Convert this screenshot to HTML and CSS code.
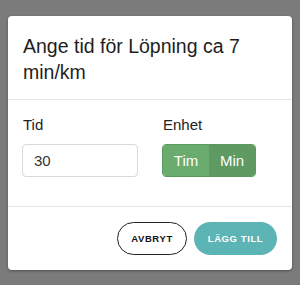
FILE: index.html
```html
<!DOCTYPE html>
<html lang="sv">
<head>
<meta charset="utf-8">
<link rel="stylesheet" href="styles.css">
</head>
<body>
<div class="modal">
  <div class="modal-header">
    <h2 class="title">Ange tid för Löpning ca 7 min/km</h2>
  </div>
  <div class="modal-body">
    <div class="field field-time">
      <label class="label">Tid</label>
      <input class="input" type="text" value="30">
    </div>
    <div class="field field-unit">
      <span class="label">Enhet</span>
      <div class="toggle">
        <span class="seg seg-tim">Tim</span>
        <span class="seg seg-min">Min</span>
      </div>
    </div>
  </div>
  <div class="modal-footer">
    <button class="btn btn-outline">AVBRYT</button>
    <button class="btn btn-primary">LÄGG TILL</button>
  </div>
</div>
</body>
</html>
```
FILE: styles.css
```css
html, body {
  margin: 0;
  padding: 0;
}
body {
  background: #7b7b7b;
  width: 300px;
  height: 285px;
  overflow: hidden;
  font-family: "Liberation Sans", Arial, sans-serif;
  color: #222;
  padding: 16px 8px 0;
  box-sizing: border-box;
}
.modal {
  background: #fff;
  border-radius: 4px;
  box-shadow: 0 1px 3px rgba(0,0,0,0.35);
  height: 254px;
  display: flex;
  flex-direction: column;
}
.modal-header {
  padding: 17px 15px 14px;
  border-bottom: 1px solid #e6e6e6;
}
.title {
  margin: 0;
  font-size: 19.5px;
  font-weight: normal;
  line-height: 26px;
  color: #1e1e1e;
}
.modal-body {
  display: flex;
  padding: 16px 14px 0;
  height: 90px;
  border-bottom: 1px solid #e6e6e6;
}
.field {
  display: flex;
  flex-direction: column;
}
.field-time {
  width: 116px;
  margin-right: 24px;
}
.label {
  font-size: 15px;
  line-height: 18px;
  color: #222;
  padding-left: 1px;
  margin-bottom: 10px;
}
.input {
  box-sizing: border-box;
  width: 116px;
  height: 33px;
  border: 1px solid #d9d9d9;
  border-radius: 4px;
  padding: 0 11px;
  font-family: "Liberation Sans", Arial, sans-serif;
  font-size: 15px;
  color: #333;
  outline: none;
}
.toggle {
  display: flex;
  width: 94px;
  height: 33px;
  border: 1px solid #5a9a5e;
  border-radius: 4px;
  overflow: hidden;
  box-sizing: border-box;
}
.seg {
  flex: 1;
  display: flex;
  align-items: center;
  justify-content: center;
  color: #fff;
  font-size: 15px;
}
.seg-tim {
  background: #6aab6e;
}
.seg-min {
  background: #5e9a62;
}
.modal-footer {
  display: flex;
  justify-content: flex-end;
  gap: 7px;
  padding: 15px 15px 0;
}
.btn {
  height: 33px;
  border-radius: 17px;
  font-family: "Liberation Sans", Arial, sans-serif;
  font-weight: bold;
  font-size: 9.5px;
  letter-spacing: 0.6px;
  padding: 0;
  cursor: pointer;
}
.btn-outline {
  width: 70px;
  background: #fff;
  border: 1.5px solid #222;
  color: #111;
}
.btn-primary {
  width: 83px;
  background: #5db4b4;
  border: none;
  color: #fff;
}
```
